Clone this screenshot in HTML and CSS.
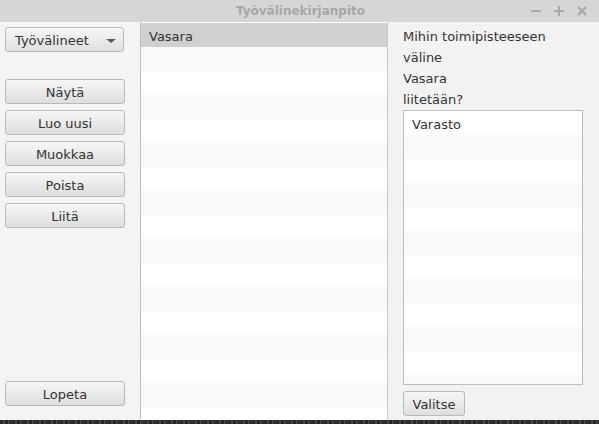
FILE: index.html
```html
<!DOCTYPE html>
<html lang="fi">
<head>
<meta charset="utf-8">
<title>Työvälinekirjanpito</title>
<link rel="stylesheet" href="styles.css">
</head>
<body>
<div class="window">
  <div class="titlebar">
    <span class="title">Työvälinekirjanpito</span>
    <div class="controls">
      <svg width="12" height="12" viewBox="0 0 12 12"><rect x="1" y="5" width="10" height="2" fill="#a9a9a9"/></svg>
      <svg width="12" height="12" viewBox="0 0 12 12"><rect x="1" y="5" width="10" height="2" fill="#a9a9a9"/><rect x="5" y="1" width="2" height="10" fill="#a9a9a9"/></svg>
      <svg width="12" height="12" viewBox="0 0 12 12"><path d="M2 2 L10 10 M10 2 L2 10" stroke="#a9a9a9" stroke-width="2.4"/></svg>
    </div>
  </div>
  <div class="content">
    <div class="left">
      <div class="combo"><span>Työvälineet</span><span class="arrow"></span></div>
      <div class="buttons">
        <button class="btn">Näytä</button>
        <button class="btn">Luo uusi</button>
        <button class="btn">Muokkaa</button>
        <button class="btn">Poista</button>
        <button class="btn">Liitä</button>
      </div>
      <button class="btn quit">Lopeta</button>
    </div>
    <div class="list main-list">
      <div class="row selected">Vasara</div>
      <div class="row"></div><div class="row"></div><div class="row"></div><div class="row"></div>
      <div class="row"></div><div class="row"></div><div class="row"></div><div class="row"></div>
      <div class="row"></div><div class="row"></div><div class="row"></div><div class="row"></div>
      <div class="row"></div><div class="row"></div><div class="row"></div><div class="row"></div>
    </div>
    <div class="right">
      <div class="label">Mihin toimipisteeseen</div>
      <div class="label">väline</div>
      <div class="label">Vasara</div>
      <div class="label">liitetään?</div>
      <div class="list side-list">
        <div class="row">Varasto</div>
        <div class="row"></div><div class="row"></div><div class="row"></div><div class="row"></div>
        <div class="row"></div><div class="row"></div><div class="row"></div><div class="row"></div>
        <div class="row"></div><div class="row"></div><div class="row"></div>
      </div>
      <button class="btn choose">Valitse</button>
    </div>
  </div>
</div>
<div class="desktop"></div>
</body>
</html>
```

FILE: styles.css
```css
* { box-sizing: border-box; }
html, body {
  margin: 0;
  padding: 0;
  width: 599px;
  height: 424px;
  overflow: hidden;
  font-family: "DejaVu Sans", sans-serif;
  font-size: 13px;
  color: #333;
}
body {
  display: flex;
  flex-direction: column;
  background: #f2f2f2;
}
.window {
  height: 420px;
  display: flex;
  flex-direction: column;
}
.titlebar {
  height: 22px;
  background: #d6d6d6;
  display: flex;
  align-items: center;
  justify-content: center;
  position: relative;
}
.title {
  font-weight: bold;
  font-size: 12px;
  color: #a6a6a6;
  padding-left: 2px;
}
.controls {
  position: absolute;
  right: 11px;
  top: 5px;
  display: flex;
  gap: 11px;
}
.controls svg { display: block; }
.content {
  flex: 1;
  display: flex;
  min-height: 0;
}
.left {
  width: 140px;
  background: #f4f4f4;
  padding: 5px 15px 14px 5px;
  display: flex;
  flex-direction: column;
}
.combo {
  height: 25px;
  width: 119px;
  border: 1px solid #b9b9b9;
  border-radius: 3px;
  background: linear-gradient(to bottom, #f6f6f6, #e0e0e0);
  display: flex;
  align-items: center;
  justify-content: space-between;
  padding: 1px 7px 0 9px;
}
.arrow {
  width: 0;
  height: 0;
  border-left: 5px solid transparent;
  border-right: 5px solid transparent;
  border-top: 4px solid #5a5a5a;
  margin-top: 1px;
}
.buttons {
  margin-top: 27px;
  display: flex;
  flex-direction: column;
  gap: 6px;
}
.btn {
  font-family: "DejaVu Sans", sans-serif;
  font-size: 13px;
  color: #333;
  height: 25px;
  width: 120px;
  border: 1px solid #b9b9b9;
  border-radius: 3px;
  background: linear-gradient(to bottom, #f6f6f6, #dedede);
  padding: 1px 0 0;
  margin: 0;
  text-align: center;
}
.quit { margin-top: auto; }
.list {
  background: #fff;
  overflow: hidden;
}
.main-list {
  width: 248px;
  border-left: 1px solid #bcbcbc;
  border-right: 1px solid #c8c8c8;
  padding-top: 1px;
}
.row {
  height: 24px;
  line-height: 21px;
  padding: 3px 0 0 8px;
  background: #fff;
}
.row:nth-child(even) { background: #f9f9f9; }
.row.selected { background: #d0d0d0; }
.right {
  flex: 1;
  background: #f2f2f2;
  padding: 4px 16px 0 15px;
  display: flex;
  flex-direction: column;
}
.label {
  line-height: 21px;
  white-space: nowrap;
}
.side-list {
  height: 275px;
  border: 1px solid #bdbdbd;
}
.choose {
  width: 62px;
  margin-top: 6px;
}
.desktop {
  height: 4px;
  background: repeating-linear-gradient(to right, #2a2a2a 0 3px, #4a4540 3px 5px, #1e2630 5px 8px, #5a4a3a 8px 9px, #303030 9px 12px);
}
```
